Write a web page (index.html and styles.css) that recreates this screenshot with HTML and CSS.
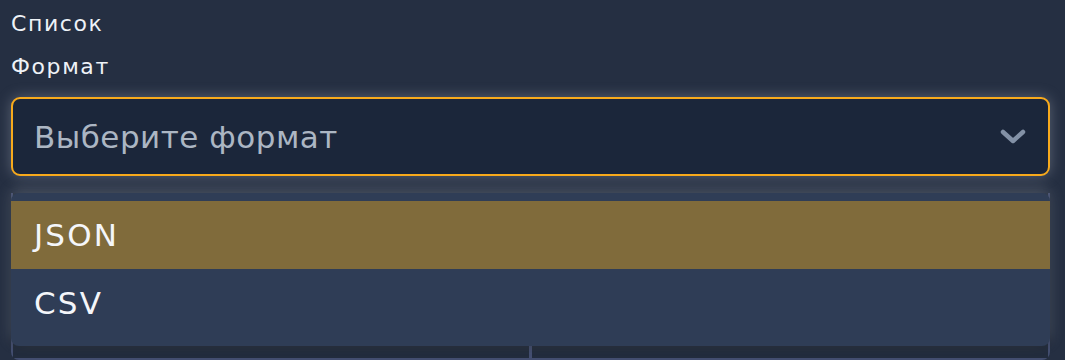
FILE: index.html
```html
<!DOCTYPE html>
<html lang="ru">
<head>
<meta charset="UTF-8">
<title>Список</title>
<link rel="stylesheet" href="styles.css">
</head>
<body>

<div class="title">Список</div>

<div class="field">
    <div class="label">Формат</div>

    <div class="select-wrap">
        <div class="select">
            <span class="placeholder">Выберите формат</span>
            <svg class="chevron" width="26" height="16" viewBox="0 0 26 16">
                <path d="M3 3 L13 12 L23 3" fill="none" stroke="#8391a6" stroke-width="4.5" stroke-linecap="round" stroke-linejoin="round"/>
            </svg>
        </div>

        <!-- выпадающий список -->
        <div class="menu">
            <div class="option selected">JSON</div>
            <div class="option">CSV</div>
        </div>
    </div>

    <div class="actions">
        <div class="action"></div>
        <div class="action"></div>
    </div>
</div>

</body>
</html>
```

FILE: styles.css
```css
body {
    margin: 0;
    padding: 10px 15px 0 11px;
    background: #252f42;
    font-family: "DejaVu Sans", "Open Sans", sans-serif;
    color: #eef2f7;
    height: 360px;
    box-sizing: border-box;
    overflow: hidden;
}

.title,
.label {
    font-size: 22px;
    line-height: 28px;
    letter-spacing: 1.6px;
}

.label {
    margin-top: 15px;
}

/* ===== セレクト ===== */
.select-wrap {
    position: relative;
    margin-top: 16px;
}

.select {
    height: 79px;
    box-sizing: border-box;
    border: 2px solid #f8aa1c;
    border-radius: 9px;
    background: #1b263a;
    display: flex;
    align-items: center;
    justify-content: space-between;
    padding: 0 22px 0 21px;
    box-shadow: 0 0 14px rgba(190, 195, 205, 0.35);
}

.placeholder {
    font-size: 31px;
    letter-spacing: 0.5px;
    color: #acb6c3;
}

.chevron {
    display: block;
}

/* メニュー */
.menu {
    position: absolute;
    top: calc(100% + 17px);
    left: 0;
    right: 0;
    z-index: 5;
    background: #2f3d56;
    border-radius: 8px;
    padding: 8px 0 9px;
    box-shadow: 0 -4px 14px rgba(190, 195, 205, 0.25), 0 2px 6px rgba(0, 0, 0, 0.25);
}

.option {
    height: 68px;
    display: flex;
    align-items: center;
    padding-left: 23px;
    font-size: 31px;
    letter-spacing: 2.2px;
    color: #f4f6fa;
}

.option.selected {
    background: #806b3b;
}

/* 下のボタン */
.actions {
    display: grid;
    grid-template-columns: 1fr 1fr;
    gap: 3px;
    background: #434e70;
    margin-top: 17px;
    height: 165px;
    border: 2px solid #434e70;
    border-top: none;
    border-radius: 0 0 8px 8px;
}

.action {
    background: #222c3d;
}
```
